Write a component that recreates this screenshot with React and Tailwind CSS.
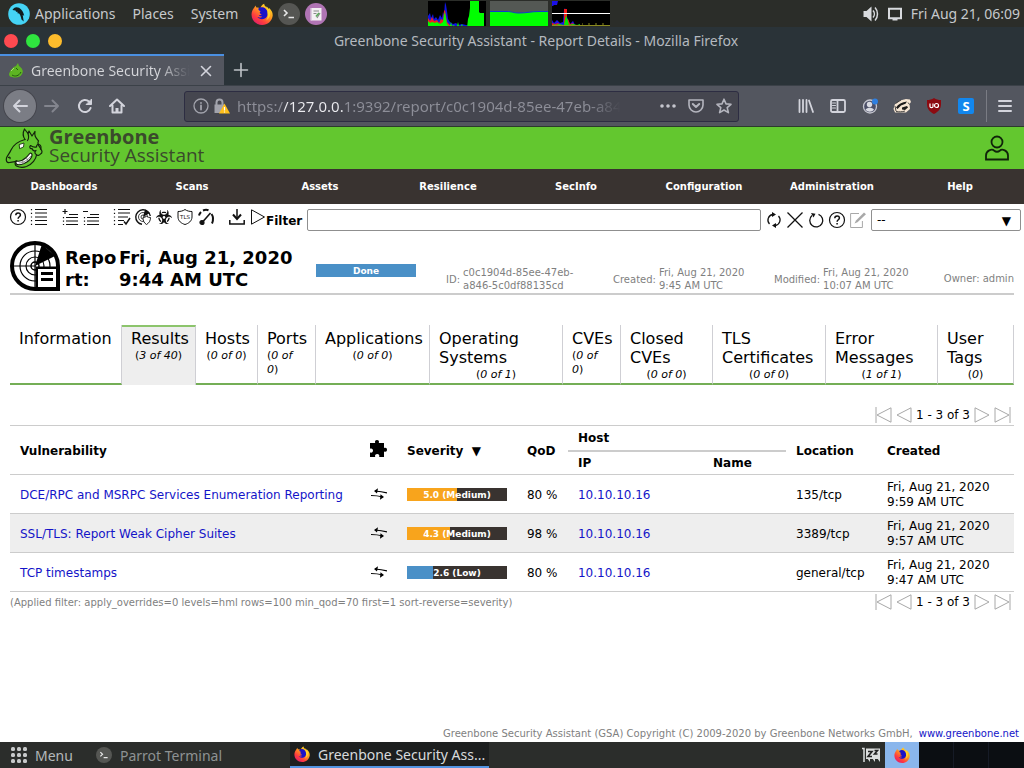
import React from "react";
import { FaBiohazard } from "react-icons/fa";

/* ---------- desktop icons ---------- */

const FirefoxIcon = ({ className = "size-[22px]" }) => (
  <svg viewBox="0 0 24 24" className={`shrink-0 ${className}`} aria-hidden="true">
    <defs>
      <linearGradient id="ffx" x1="0.85" y1="0.05" x2="0.2" y2="0.95">
        <stop offset="0" stopColor="#ffe226" />
        <stop offset="0.4" stopColor="#ff9a1f" />
        <stop offset="0.75" stopColor="#ff3b3f" />
        <stop offset="1" stopColor="#e0206a" />
      </linearGradient>
    </defs>
    <path
      d="M3.4 5.2C4 4 4.6 3.2 5.2 2.6c0 1 .3 1.8.8 2.4 1.8-.2 3 .2 4.2 1C10.600 3.600 12 1.800 14.400.8c0 1.800 1 2.800 2.600 3.800 1 .7 1.900 1.500 2.500 2.600.2-.7.200-1.300 0-2C22.600 8 24 11 23.600 14.200 22.900 19.800 18 24 12.200 24 5.800 24 .6 19.200.6 12.800c0-2.800 1-5.400 2.800-7.600z"
      fill="url(#ffx)"
    />
    <path
      d="M8 6c2-1.800 5.500-2 8 .2 2.600 2.300 3.200 6.800.6 9.600-2.600 2.600-7.400 2.400-9.600-.4 2 .8 4.200.6 5.200-.8-1.600.1-3-.5-3.600-1.600 1.400.4 2.600.2 3-.6-2.200-.8-2.800-2.300-1-3.700C9.400 9 7.800 7.800 8 6z"
      fill="#1a12c8"
    />
    <path d="M16.500 3.500c3 2 4.800 5 4.400 9-.4 3-2 5-4.400 6.500 2-3 2.200-5 1.400-8 .2-2.800-.2-5-1.400-7.500z" fill="#ffd92e" opacity="0.85" />
  </svg>
);

const TerminalIcon = ({ className = "size-[22px]" }) => (
  <svg viewBox="0 0 22 22" className={`shrink-0 ${className}`} aria-hidden="true">
    <circle cx="11" cy="11" r="11" fill="#555653" />
    <path d="M6 7l3 3-3 3M10.500 14.500h5.500" fill="none" stroke="#e8e8e8" strokeWidth="1.600" />
  </svg>
);

const NotesIcon = () => (
  <svg viewBox="0 0 22 22" className="size-[22px]" aria-hidden="true">
    <circle cx="11" cy="11" r="11" fill="#b074b4" />
    <path d="M6 5h10.500v12.500H6z" fill="#f4f0f4" />
    <path d="M8.500 8h5.500M8.500 10.500h3M12 15l3-5" stroke="#8a8a8a" strokeWidth="1.200" />
    <path d="M11 13.500l3-3.500" stroke="#58a858" strokeWidth="1.600" />
    <path d="M6 5v12.500" stroke="#d7c2da" strokeWidth="1.500" />
  </svg>
);

const ParrotIcon = () => (
  <svg viewBox="0 0 22 22" className="size-[22px]" aria-hidden="true">
    <circle cx="11" cy="11" r="10.800" fill="#45d3f5" />
    <path d="M4.500 7C5.500 4.300 8.500 3.400 11 4.800c2.800 1.500 4.500 4.500 5.200 8l-1.500-.8 1 6.500-2.200-2c-.6-3-1.300-4.800-2.800-6.500l-.7 1-.8-2.500-1 .6-.7-1.600C6.200 7.300 5.300 7 4.500 7z" fill="#111b1e" />
  </svg>
);

const VolumeIcon = () => (
  <svg viewBox="0 0 16 16" className="size-4" aria-hidden="true">
    <path d="M0.500 5H3.500L8.500 0.500V15.500L3.500 11H0.500z" fill="#d8dade" />
    <path d="M10 4.500c1.800 2 1.800 5 0 7M12 1.500c3.300 3.500 3.300 9.500 0 13" fill="none" stroke="#d8dade" strokeWidth="1.500" />
  </svg>
);

const ScreenIcon = () => (
  <svg viewBox="0 0 16 16" className="size-4" aria-hidden="true">
    <path d="M2 2.800h12v9.400H2z" fill="none" stroke="#d8dade" strokeWidth="2" />
    <path d="M5.500 13.500h5" stroke="#d8dade" strokeWidth="2" />
  </svg>
);

const CpuGraph = () => (
  <svg viewBox="0 0 58 25" className="h-[25px] w-[58px]" aria-hidden="true">
    <path d="M0 0h58v25H0z" fill="#000" />
    <path d="M0 25V15l2-3 1 5 2-4 1 5 2-2 2 3 2-5 2 3 1-6 1 3 1-13 1 3 1 6 1 8 2 3 3 2 3-1 2 2 4-1 4 1 6 1v4z" fill="#1014e0" />
    <path d="M0 25v-8l2 3 2-4 2 4 3-1 2 3 2-4 2 1 1-9 1-1 1 6 1 6 3 3 3 1v2z" fill="#f02020" />
    <path d="M0 25v-5l2 2 2-1 3 1 2-1 3 2 3-2 1-7 1-3 1 6 1 6 2 2h1l1-4 1 4 2-1 1 2 2-1 1-4 1 4h2l1-2 1 3 2-1 2 2 1-9 1-3 1-8V0h9v11l1 1h4V25z" fill="#00ff00" />
  </svg>
);

const MemGraph = () => (
  <svg viewBox="0 0 58 25" className="h-[25px] w-[58px]" aria-hidden="true">
    <path d="M0 0h58v25H0z" fill="#545854" />
    <path d="M0 10.500h17c5 0 6 1.500 12 1.500 8 0 12-1.500 20-1.500h9V25H0z" fill="#00ff00" />
    <path d="M0 10.500h17c5 0 6 1.500 12 1.500 8 0 12-1.500 20-1.500h9" fill="none" stroke="#1238d0" />
  </svg>
);

const NetGraph = () => (
  <svg viewBox="0 0 58 25" className="h-[25px] w-[58px]" aria-hidden="true">
    <path d="M0 0h58v25H0z" fill="#000" />
    <path d="M0 0h6l-1 4H2L1 5H0zM0 25v-6l2 3 3-3 3 3 3-1 1-12 1-2 1 4 1 5 3 7 3-3 2 4z" fill="#1a10e8" />
    <path d="M12 8h3v12h-3zM0 25v-3l3 1 3-1 3 2h3v-6h4l2 5 3-1 2 3z" fill="#f01818" />
    <path d="M1 25l1-2 2 1 3-1 5 1 1-5 1-5 2 6 1 4 4-1 4 1 3-1v2z" fill="#00e800" />
    <path d="M0 24.500h58M30 23h1M36 23h2M43 23h2M50 23h2" stroke="#8a8a20" />
    <path d="M0 12.500h58" stroke="#fff" />
  </svg>
);

/* ---------- browser icons ---------- */

const LineIcon = ({ d, size = "size-4", w = 2, children, color = "#d3d4dc" }) => (
  <svg viewBox="0 0 16 16" className={size} fill="none" stroke={color} strokeWidth={w} strokeLinecap="round" strokeLinejoin="round" aria-hidden="true">
    {d && <path d={d} />}
    {children}
  </svg>
);

const DragonHead = ({ className }) => (
  <svg viewBox="0 0 40 40" className={className} aria-hidden="true">
    <g fill="none" stroke="#14240c" strokeWidth="1.200" strokeLinejoin="round" strokeLinecap="round">
      <path d="M20 11.500C14 13 8.500 17 6 22c-1.500 3.500-3.500 5-4.500 8-.8 3 .5 5 3 4.500 2.500-.5 5-.5 7.500-1.500" />
      <path d="M20 11.500C17.500 8 18 4 19.500 1l3.500 4.500L24 3l3 5 3-4.500c-1 4.500 1 6.500 3.500 9.500-2 3 1 5.500 2.500 8" />
      <path d="M23 5.500c1 3 1 5-.5 7" />
      <path d="M34 16.500c2 .5 2.500 3 1.500 4.500 2 1.500 2 4 0 5-1 1.500-3 2-4 .5-2-.5-2-3-.5-4-1.500 1-3.500 0-4-2-2 .5-3-1.500-1.500-3 2 1.500 4 2 6 1.500 0-2 1-2.800 2.500-2.500z" />
      <path d="M31.500 27c-.5 4-4 9-10 11.500-4 1.500-8 .5-10-.5-1.500-1-2-3-.5-5" />
      <path d="M11.500 33c4 1 7-1 9-3 2.500-1.500 3-4 5-5 1.500 0 2 2 1 4-1.500 3-4 5-7.500 6.500-3 1.200-6 1.700-7.500.5-1-1-1-2 0-3z" fill="#fff" />
      <path d="M14 35c4 0 9-3 12-7M17.500 32.500l1 3.500M21.500 30l1.500 3" stroke="#666" strokeWidth="0.700" />
      <path d="M14.500 16.500l4.500-1.500-.5 4-3.500 1.500z" fill="#fff" strokeWidth="0.800" />
      <path d="M3.500 29.500c1.200-.8 2 0 1.500 1.200" />
    </g>
  </svg>
);

const GreenFavicon = () => (
  <svg viewBox="0 0 16 16" className="size-4 shrink-0" aria-hidden="true">
    <path d="M1 11C2 7 5 4 8 3l2-3 1 3c3 2 5 5 3 8-2 4-7 4-10 3-2 0-3-1-3-3z" fill="#5db522" />
    <path d="M4 12c3 2 7 1 9-3M8 5l2 2" stroke="#235c10" fill="none" />
    <path d="M3 8l3-3" stroke="#a5e070" />
  </svg>
);

const ToolButton = ({ label, children, className = "" }) => (
  <button type="button" aria-label={label} className={`flex size-8 items-center justify-center ${className}`}>
    {children}
  </button>
);

/* ---------- page icons ---------- */

const I = ({ children, label, muted, w = 1.2 }) => (
  <button type="button" aria-label={label} className="size-4 shrink-0">
    <svg viewBox="0 0 16 16" className="size-4 overflow-visible" fill="none" stroke={muted ? "#a8a8a8" : "#111"} strokeWidth={w}>
      {children}
    </svg>
  </button>
);

const HelpGlyph = () => (
  <>
    <circle cx="8" cy="8" r="7.500" />
    <path d="M5.800 6.200c0-3 4.600-3 4.600-.2 0 1.800-2.300 1.800-2.300 3.800M8.100 11v1.500" strokeWidth="1.500" />
  </>
);

const ListGlyph = () => (
  <>
    <path d="M4 .5h12M4 4h12M4 8h12M4 11.500h12M4 15.500h12" strokeWidth="1.200" />
    <path d="M0.500 0v16" strokeDasharray="1.200 2.500" />
  </>
);

const Radar = ({ className }) => (
  <svg viewBox="0 0 50 50" className={className} fill="none" stroke="#000" aria-hidden="true">
    <circle cx="25" cy="25" r="23" strokeWidth="4" />
    <circle cx="25" cy="25" r="15" strokeWidth="1.200" />
    <circle cx="25" cy="25" r="9" strokeWidth="1.200" />
    <circle cx="25" cy="25" r="4" strokeWidth="1.500" />
    <path d="M2 25h24M25 2v46" strokeWidth="1.200" />
    <path d="M25 25L32 3l13 12z" fill="#000" stroke="none" />
    <path d="M25.500 25.500H50V50H25.500z" fill="#000" stroke="none" />
    <path d="M28 28h18v19H28z" fill="#fff" stroke="none" />
    <path d="M31 32.500h12M31 38.500h12" strokeWidth="3" />
    <path d="M25 48h25" strokeWidth="4" />
  </svg>
);

const DeltaIcon = () => (
  <svg viewBox="0 0 16 12" className="block h-3 w-4" fill="none" stroke="#000" strokeWidth="1.200" aria-hidden="true">
    <path d="M16 5C12 3.800 8 3.200 4 3M0 7.500c4 0 8 .5 12 1.500" />
    <path d="M3 3L7 .2 6 5.500zM13 9L9.500 6.300 9 11.800z" fill="#000" stroke="none" />
  </svg>
);

const PuzzleIcon = () => (
  <svg viewBox="0 0 17 17" className="block size-[17px]" aria-label="Solution type" role="img">
    <path d="M0 3h5.200C4.500 1 5.500 0 7 0s2.500 1 1.800 3H14v5c2-.8 3 .2 3 1.700s-1 2.500-3 1.700V17H9.200c.7-2-.5-3-2-3s-2.700 1-2 3H0v-4.500c2 .6 3-.5 3-1.900S2 8 0 8.700z" fill="#000" />
  </svg>
);

/* ---------- data ---------- */

const menus = ["Dashboards", "Scans", "Assets", "Resilience", "SecInfo", "Configuration", "Administration", "Help"];

const tabs = [
  ["Information", null],
  ["Results", "3 of 40"],
  ["Hosts", "0 of 0"],
  ["Ports", "0 of 0"],
  ["Applications", "0 of 0"],
  ["Operating Systems", "0 of 1"],
  ["CVEs", "0 of 0"],
  ["Closed CVEs", "0 of 0"],
  ["TLS Certificates", "0 of 0"],
  ["Error Messages", "1 of 1"],
  ["User Tags", "0"],
];

const results = [
  { name: "DCE/RPC and MSRPC Services Enumeration Reporting", score: 5.0, level: "Medium", qod: 80, host: "10.10.10.16", loc: "135/tcp", time: "9:59 AM UTC" },
  { name: "SSL/TLS: Report Weak Cipher Suites", score: 4.3, level: "Medium", qod: 98, host: "10.10.10.16", loc: "3389/tcp", time: "9:57 AM UTC" },
  { name: "TCP timestamps", score: 2.6, level: "Low", qod: 80, host: "10.10.10.16", loc: "general/tcp", time: "9:47 AM UTC" },
];

/* ---------- sections ---------- */

const DesktopPanel = () => (
  <div className="grid h-[27px] grid-cols-[1fr_auto_1fr] items-center bg-[#2b2d29] text-[14px] text-[#c6c9cc]">
    <nav className="flex items-center pl-2">
      <ParrotIcon />
      <button type="button" className="ml-[5px]">Applications</button>
      <button type="button" className="ml-[17px]">Places</button>
      <button type="button" className="ml-[17px]">System</button>
      <span className="ml-[13px] flex gap-[5px]">
        <FirefoxIcon />
        <TerminalIcon />
        <NotesIcon />
      </span>
    </nav>
    <div className="flex gap-1 pl-[14px]">
      <CpuGraph />
      <MemGraph />
      <NetGraph />
    </div>
    <div className="flex items-center justify-end gap-2 pr-1">
      <VolumeIcon />
      <ScreenIcon />
      <span>Fri Aug 21, 06:09</span>
    </div>
  </div>
);

const BrowserChrome = () => (
  <header className="bg-[#2a3338] text-[14px] text-[#b4b9bf]">
    <div className="flex h-[27px] items-center pl-1">
      <div className="flex gap-2">
        <button type="button" aria-label="Close window" className="size-[14px] rounded-full bg-[#ff4a50]" />
        <button type="button" aria-label="Maximize window" className="size-[14px] rounded-full bg-[#2fe43f]" />
        <button type="button" aria-label="Minimize window" className="size-[14px] rounded-full bg-[#fdbc2c]" />
      </div>
      <h1 className="flex-1 pr-[14px] text-center">Greenbone Security Assistant - Report Details - Mozilla Firefox</h1>
    </div>
    <div className="flex h-[31px] items-stretch">
      <div className="flex w-56 items-center border-t-2 border-[#4a90e2] bg-[#53565f] pr-[10px] pl-2 text-[#d5d6da]">
        <GreenFavicon />
        <span className="ml-[7px] flex-1 overflow-hidden bg-[linear-gradient(90deg,#d5d6da_80%,transparent)] bg-clip-text whitespace-nowrap text-transparent">
          Greenbone Security Assistant
        </span>
        <button type="button" aria-label="Close tab" className="ml-2">
          <LineIcon d="M3.500 3.500l9 9M12.500 3.500l-9 9" w={1.6} />
        </button>
      </div>
      <button type="button" aria-label="New tab" className="ml-[9px] self-center">
        <LineIcon d="M1.500 8h13M8 1.500v13" w={1.600} color="#bfc3c7" />
      </button>
    </div>
    <div className="flex h-[42px] items-center border-t border-b border-t-[#3b4148] border-b-[#2c3b2c] bg-[#53565f] pr-[3px] pl-1">
      <ToolButton label="Back" className="rounded-full bg-[#7b7d85] ring-1 ring-[#45464e]">
        <LineIcon d="M15 8H2M7.500 2.500L2 8l5.500 5.500" />
      </ToolButton>
      <ToolButton label="Forward">
        <LineIcon d="M1 8h13M8.500 2.500L14 8l-5.500 5.500" color="#83858e" />
      </ToolButton>
      <ToolButton label="Reload" className="ml-px">
        <LineIcon d="M13.600 10A6 6 0 1 1 12 3.600">
          <path d="M14.500 1.500v5H9.500z" fill="#d3d4dc" strokeWidth="1" />
        </LineIcon>
      </ToolButton>
      <ToolButton label="Home">
        <LineIcon d="M1 8l7-6.500L15 8M3.500 7.500v7h9v-7" w={2}>
          <path d="M8 14v-4" strokeWidth="3" strokeLinecap="butt" />
        </LineIcon>
      </ToolButton>
      <div className="ml-[51px] flex h-[31px] flex-1 items-center rounded-[3px] border border-[#2d2d42] bg-[#45464f] pr-[6px] pl-2">
        <LineIcon w={1.3} color="#a2a3ac">
          <circle cx="8" cy="8" r="7" />
          <path d="M8 7.500v4M8 4.800v.2" strokeWidth="1.800" />
        </LineIcon>
        <svg viewBox="0 0 18 16" className="ml-1 h-4 w-[18px] shrink-0" aria-hidden="true">
          <path d="M3.500 7V4.500c0-4 6-4 6 0V7" fill="none" stroke="#a2a3ac" strokeWidth="2" />
          <path d="M1.500 6.500h10V15h-10z" fill="#a2a3ac" />
          <path d="M11.500 5.500L17 15.500H6z" fill="#ffbf1a" />
          <path d="M11.500 9v3.500M11.500 13.500v1" stroke="#fff" strokeWidth="1.200" />
        </svg>
        <input
          aria-label="Address"
          defaultValue="https://127.0.0.1:9392/report/c0c1904d-85ee-47eb-a846-5c0df88135cd"
          className="ml-[6px] w-[384px] min-w-0 bg-[linear-gradient(90deg,#8d8e98_47px,#ececf0_47px,#ececf0_107px,#8d8e98_107px,#8d8e98_350px,transparent_384px)] bg-clip-text text-[15px] text-transparent outline-none"
        />
        <div className="ml-auto flex items-center gap-3">
          <LineIcon color="#c4c5cd">
            <path d="M2 8h.01M8 8h.01M14 8h.01" strokeWidth="3.600" />
          </LineIcon>
          <LineIcon d="M1 2h14v5c0 4-3.500 7-7 7s-7-3-7-7z" w={1.6} color="#b4b5be">
            <path d="M4.800 6l3.200 3 3.200-3" strokeWidth="2" />
          </LineIcon>
          <LineIcon d="M8 1.200l2 4.700 5 .4-3.800 3.300 1.200 5L8 12l-4.400 2.600 1.200-5L1 6.300l5-.4z" w={1.6} color="#b4b5be" />
        </div>
      </div>
      <div className="ml-[51px] flex items-center">
        <ToolButton label="Library">
          <LineIcon d="M1.500 2v12M5 2v12M8.500 2v12M11 2.500l4 11.500" w={1.8} />
        </ToolButton>
        <ToolButton label="Sidebars">
          <LineIcon w={1.8}>
            <rect x="1" y="2" width="14" height="12" rx="1.500" />
            <path d="M7.500 2v12" />
            <path d="M2.500 5h3M2.500 7.500h3M2.500 10h3" strokeWidth="1.100" />
          </LineIcon>
        </ToolButton>
        <ToolButton label="Account">
          <svg viewBox="0 0 16 16" className="size-4" aria-hidden="true">
            <circle cx="8" cy="8.500" r="6.500" fill="#4c5068" stroke="#c5c6cf" strokeWidth="1.300" />
            <circle cx="7.500" cy="6.500" r="2.700" fill="#d9dae1" />
            <path d="M3.500 11.500c2-2.500 6.500-2.500 8.500 0-2 3-6.500 3-8.500 0z" fill="#d9dae1" />
            <circle cx="13" cy="3.500" r="3" fill="#2f7fe0" />
          </svg>
        </ToolButton>
        <ToolButton label="Privacy Badger">
          <svg viewBox="0 0 18 16" className="h-4 w-[18px]" aria-hidden="true">
            <path d="M.5 11L2 6l5-3.500L13 1l4 .5 1 2.500-1.500 2 .5 5-4 3.500H2z" fill="#f4e4d2" />
            <path d="M3 9.500C5 6 9 4 14 3.500l-1.500 2.200L8 7.500l-3.500 3.500z" fill="#1b1b1b" />
            <path d="M9 9.500l5-1.500 1 1.500-3 2.500-3-.5z" fill="#1b1b1b" />
            <path d="M2.500 5.500L8 2M3 13.500c3 .5 6 .5 9-.5M2 8l1 5M15 4.500l1.500 2" fill="none" stroke="#333" strokeWidth="0.900" />
          </svg>
        </ToolButton>
        <ToolButton label="uBlock Origin">
          <svg viewBox="0 0 16 16" className="size-4" aria-hidden="true">
            <path d="M8 0c2 1.500 4.500 2 7 2v4c0 5-3 8-7 10C4 14 1 11 1 6V2c2.500 0 5-.5 7-2z" fill="#8c0a10" />
            <path d="M4 5.500v3c0 1.500 3 1.500 3 0v-3" fill="none" stroke="#fff" strokeWidth="1.200" />
            <circle cx="10.500" cy="7.500" r="2" fill="none" stroke="#fff" strokeWidth="1.200" />
          </svg>
        </ToolButton>
        <ToolButton label="Script extension">
          <span className="flex size-4 items-center justify-center rounded-[2px] bg-[#1287ee] text-[13px] leading-4 font-bold text-white">S</span>
        </ToolButton>
        <span className="ml-1 h-8 w-px bg-[#7a7c84]" />
        <ToolButton label="Menu" className="ml-[2px]">
          <LineIcon d="M2 3h12M2 8h12M2 13h12" />
        </ToolButton>
      </div>
    </div>
  </header>
);

const FilterBar = () => (
  <div className="flex items-start pt-[5px] pr-[3px] pl-[10px]">
    <div className="flex shrink-0 gap-[15px]">
      <div className="flex gap-[5px]">
        <I label="Help"><HelpGlyph /></I>
        <I label="Reports list"><ListGlyph /></I>
      </div>
      <div className="flex gap-[5px]">
        <I label="Add to assets">
          <path d="M0.500 2.500h5M3 0v5M7 5.500h9M4 8.500h12M4 12h12M4 15.500h12" strokeWidth="1.200" />
          <path d="M1.500 8v8" strokeDasharray="1.200 2.300" />
        </I>
        <I label="Remove from assets">
          <path d="M0 2.500h5M7 5.500h9M4 8.500h12M4 12h12M4 15.500h12" strokeWidth="1.200" />
          <path d="M1.500 8v8" strokeDasharray="1.200 2.300" />
        </I>
      </div>
      <div className="flex gap-[5px]">
        <I label="Corresponding task">
          <path d="M4 .5h12M4 4h12M4 8h10M4 11.500h6M4 15.500h5" strokeWidth="1.200" />
          <path d="M0.500 0v16" strokeDasharray="1.200 2.500" />
          <path d="M10 12.500l2 2.500 4-6" strokeWidth="1.500" />
        </I>
        <I label="Corresponding results">
          <path d="M7 15.300A7.300 7.300 0 1 1 15.300 7" strokeWidth="1.400" />
          <circle cx="8" cy="8" r="4.500" strokeWidth="0.800" />
          <circle cx="8" cy="8" r="2" strokeWidth="0.800" />
          <path d="M8 8l2-7.500L15 4z" fill="#111" stroke="none" />
          <path d="M8 8.500c1.500 0 2.500-.5 3.500-1.200 1 .8 2.300 1.200 4 1.200 0 3.500-1.500 5.500-4 7-2.300-1.500-3.500-3.500-3.500-7z" fill="#fff" strokeWidth="0.900" />
        </I>
        <button type="button" aria-label="Corresponding vulnerabilities" className="size-4 shrink-0 text-[#111]">
          <FaBiohazard className="size-4" aria-hidden="true" />
        </button>
        <I label="Corresponding TLS certificates">
          <path d="M8 .5c2 1.500 4.500 2 7 2V8c0 4-3.500 6.500-7 7.500C4.500 14.500 1 12 1 8V2.500c2.500 0 5-.5 7-2z" strokeWidth="1" />
          <text x="8" y="9.500" textAnchor="middle" fontSize="5.500" fill="#111" stroke="none">TLS</text>
        </I>
        <I label="Corresponding performance">
          <path d="M1 6.500C1.300 5 2 4 3 3M5 1.500c2-.8 4-.8 5.500-.2M13.500 5c1.800 2.500 2 6 .5 9.500" strokeWidth="2" />
          <path d="M5 12.500L12.500 4" strokeWidth="1.600" />
          <circle cx="4" cy="13.500" r="2" fill="#111" />
        </I>
      </div>
      <div className="flex gap-[5px]">
        <I label="Download report">
          <path d="M.8 11v4h14.400v-4M8 0v9" strokeWidth="1.500" />
          <path d="M4 5.500L8 10l4-4.500" strokeWidth="2" />
        </I>
        <I label="Trigger alert"><path d="M1.500 .8L14.500 8 1.500 15.200z" strokeWidth="1" /></I>
      </div>
    </div>
    <label htmlFor="powerfilter" className="mt-1 leading-4 font-bold">Filter</label>
    <input id="powerfilter" className="ml-[5px] h-[22px] min-w-0 flex-1 rounded-[2px] border border-[#8f8f8f] px-1" />
    <div className="mx-[5px] mt-[3px] flex shrink-0 gap-[5px]">
      <I label="Update filter">
        <path d="M6.500 2.500a5.700 5.700 0 0 0-3 9.500M9.500 13.500a5.700 5.700 0 0 0 3-9.500" strokeWidth="1.300" />
        <path d="M6 0l4 2.500L6 5zM10 11l-4 2.500 4 2.500z" fill="#111" stroke="none" />
      </I>
      <I label="Remove filter"><path d="M0.500 0.500l15 15M15.500 0.500l-15 15" strokeWidth="1.300" /></I>
      <I label="Reset filter">
        <path d="M4 3.500a6.500 6.500 0 1 0 6.500-1.200" strokeWidth="1.300" />
        <path d="M3 1l4.500.8-2 3.800z" fill="#111" stroke="none" />
      </I>
      <I label="Filter help"><HelpGlyph /></I>
      <I label="Edit filter" muted>
        <path d="M9 1.500H.6v14h11.800V9" strokeWidth="1" />
        <path d="M4.500 11.500L6 8.500 14 .5l2 1.800-8.500 8z" fill="#a8a8a8" stroke="none" />
      </I>
    </div>
    <div className="relative w-[150px] shrink-0">
      <select aria-label="Saved filters" className="h-[22px] w-full appearance-none rounded-[2px] border border-[#8f8f8f] bg-white px-[5px] leading-4">
        <option>--</option>
      </select>
      <span className="pointer-events-none absolute top-1 right-[10px] leading-4">▼</span>
    </div>
  </div>
);

const Info = ({ label, children, className = "", valueClass = "" }) => (
  <div className={`flex shrink-0 items-center gap-[3px] ${className}`}>
    <dt className="whitespace-nowrap">{label}:</dt>
    <dd className={valueClass}>{children}</dd>
  </div>
);

const ReportHeader = () => (
  <div className="mt-[10px] flex items-end border-b-2 border-[#cccccc]">
    <div className="flex items-center">
      <Radar className="mb-[2px] size-[50px] shrink-0" />
      <h2 className="mt-1 ml-[5px] flex text-[18px] leading-[22px] font-bold">
        <span className="w-[54px] break-all">Report:</span>
        <span className="w-[186px]">Fri, Aug 21, 2020 9:44 AM UTC</span>
      </h2>
    </div>
    <div className="mb-4 ml-[11px] h-[13px] w-[100px] shrink-0 self-end bg-[#4a90c7] text-center text-[9px] leading-[14px] font-bold text-white">Done</div>
    <dl className="ml-[30px] flex min-w-0 flex-1 items-end pb-px text-[10px] leading-[13px] text-[#7f7f7f]">
      <Info label="ID" className="w-[167px]" valueClass="w-[115px]">c0c1904d-85ee-47eb-a846-5c0df88135cd</Info>
      <Info label="Created" className="w-[161px]" valueClass="w-[88px]">Fri, Aug 21, 2020 9:45 AM UTC</Info>
      <Info label="Modified" valueClass="w-[88px]">Fri, Aug 21, 2020 10:07 AM UTC</Info>
      <Info label="Owner" className="mb-[7px] ml-auto">admin</Info>
    </dl>
  </div>
);

const Tabs = () => (
  <div
    role="tablist"
    className="mt-[30px] grid grid-cols-[112fr_74fr_62fr_58fr_114fr_133fr_58fr_92fr_113fr_112fr_76fr]"
  >
    {tabs.map(([name, count]) => {
      const active = name === "Results";
      return (
        <button
          key={name}
          type="button"
          role="tab"
          aria-selected={active}
          className={`flex min-h-[60px] min-w-0 flex-col items-center border-r border-r-[#cfcfd4] px-[9px] text-left ${
            active
              ? "border-t-2 border-t-[#8cc46c] bg-[#eeeeee] pt-[2px]"
              : "border-b-2 border-b-[#74ae56] pt-1"
          }`}
        >
          <span className="self-start text-[16px] leading-[19px]">{name}</span>
          {count && (
            <span className="mt-px text-[11px] leading-[14px]">
              (<i>{count}</i>)
            </span>
          )}
        </button>
      );
    })}
  </div>
);

const Pager = () => (
  <nav aria-label="Pagination" className="flex items-center gap-[5px] pr-[3px]">
    <I label="First" muted w={1}><path d="M1 0v16M16 .8v14.400L2 8z" /></I>
    <I label="Previous" muted w={1}><path d="M15 .8v14.400L1 8z" /></I>
    <span className="-mx-px pt-px leading-[15px]">1 - 3 of 3</span>
    <I label="Next" muted w={1}><path d="M1 .8v14.400L15 8z" /></I>
    <I label="Last" muted w={1}><path d="M15 0v16M0 .8v14.400L14 8z" /></I>
  </nav>
);

const SeverityBar = ({ score, level }) => (
  <div className="relative h-[13px] bg-[#393330] text-center text-[9px] leading-[14px] font-bold text-white">
    <div className={`absolute inset-y-0 left-0 ${level === "Low" ? "bg-[#4a90c7]" : "bg-[#f8a41c]"}`} style={{ width: `${score * 10}%` }} />
    <span className="relative">{score.toFixed(1)} ({level})</span>
  </div>
);

const ResultsTable = () => (
  <table className="w-full table-fixed border-collapse text-left">
    <colgroup>
      <col />
      <col className="w-9" />
      <col className="w-[120px]" />
      <col className="w-[51px]" />
      <col className="w-[135px]" />
      <col className="w-[83px]" />
      <col className="w-[91px]" />
      <col className="w-[137px]" />
    </colgroup>
    <thead className="border-y border-[#cccccc]">
      <tr className="h-[25px]">
        <th rowSpan={2} className="px-[10px] pt-[2px]">Vulnerability</th>
        <th rowSpan={2} className="px-[9px] pb-1"><PuzzleIcon /></th>
        <th rowSpan={2} className="px-[10px] pt-[2px] whitespace-nowrap">Severity&nbsp; ▼</th>
        <th rowSpan={2} className="px-[10px] pt-[2px]">QoD</th>
        <th colSpan={2} className="border-b-2 border-[#cccccc] px-[10px]">Host</th>
        <th rowSpan={2} className="px-[10px] pt-[2px]">Location</th>
        <th rowSpan={2} className="px-[10px] pt-[2px]">Created</th>
      </tr>
      <tr className="h-6">
        <th className="px-[10px]">IP</th>
        <th className="px-[10px]">Name</th>
      </tr>
    </thead>
    <tbody>
      {results.map((r) => (
        <tr key={r.name} className="h-[39px] border-b border-[#cccccc] even:bg-[#eeeeee]">
          <td className="px-[10px] pt-[2px]"><a href="#result" className="text-[#1414c8]">{r.name}</a></td>
          <td className="px-[10px]"><DeltaIcon /></td>
          <td className="px-[10px]"><SeverityBar score={r.score} level={r.level} /></td>
          <td className="pt-[2px] pl-[10px] whitespace-nowrap">{r.qod} %</td>
          <td className="px-[10px] pt-[2px]"><a href="#host" className="text-[#1414c8]">{r.host}</a></td>
          <td className="px-[10px]" />
          <td className="px-[10px] pt-[2px]">{r.loc}</td>
          <td className="px-[10px] pt-[2px] leading-[15px]">Fri, Aug 21, 2020<br />{r.time}</td>
        </tr>
      ))}
    </tbody>
  </table>
);

const Taskbar = () => (
  <footer className="flex h-[26px] items-center bg-[#2b2d2b] text-[14px] text-[#b4b8ba]">
    <button type="button" className="flex w-[90px] items-center gap-2 pl-[11px]">
      <svg viewBox="0 0 16 16" className="size-4" fill="#c8cacb" aria-hidden="true">
        {[0, 6, 12].map((x) => [0, 6, 12].map((y) => <rect key={`${x}-${y}`} x={x} y={y} width="4" height="4" rx="1.500" />))}
      </svg>
      Menu
    </button>
    <button type="button" className="flex w-[200px] items-center gap-2 pl-[6px] text-[#8e9293]">
      <TerminalIcon className="size-4" />
      Parrot Terminal
    </button>
    <button type="button" className="flex h-full w-[199px] items-center gap-2 border-b-2 border-[#5294e2] bg-[#1d1f1f] pl-1 whitespace-nowrap text-[#d8dadc]">
      <FirefoxIcon className="size-4" />
      Greenbone Security Ass...
    </button>
    <svg viewBox="0 0 18 16" className="ml-auto h-4 w-[18px]" aria-hidden="true">
      <path d="M0 1.500h2V15" fill="none" stroke="#dcdede" strokeWidth="1.500" />
      <path d="M4 1.500h14V12H4zM5 11h3v4zM10 11h3v4zM15 11h3v4z" fill="#dcdede" />
      <path d="M6 4.500h4L6 9.500h4M12.500 3.500h3l-3 3.500h3" fill="none" stroke="#222" strokeWidth="1.600" />
    </svg>
    <button type="button" aria-label="Workspace 1" className="ml-[5px] flex h-full w-[34px] items-center justify-center bg-[#8ab6ec]">
      <FirefoxIcon className="size-4" />
    </button>
    <div className="grid h-full w-[105px] grid-cols-3 divide-x divide-[#161b26] bg-[#0b0e12]">
      <button type="button" aria-label="Workspace 2" />
      <button type="button" aria-label="Workspace 3" />
      <button type="button" aria-label="Workspace 4" />
    </div>
  </footer>
);

export default function App() {
  return (
    <div className="flex min-h-screen flex-col bg-white font-['Noto_Sans',sans-serif]">
      <DesktopPanel />
      <BrowserChrome />
      <div className="flex flex-1 flex-col font-['DejaVu_Sans',sans-serif] text-[12px] text-black">
        <div className="flex h-[42px] items-center bg-[#63c72f] pr-[14px] pl-[5px]">
          <DragonHead className="size-10" />
          <div className="ml-1 pb-1 font-['Open_Sans',sans-serif] text-[#3a4a2c]">
            <div className="text-[20px] leading-[18px] font-bold">Greenbone</div>
            <div className="text-[19px] leading-[19px]">Security Assistant</div>
          </div>
          <button type="button" aria-label="User menu" className="ml-auto">
            <svg viewBox="0 0 26 26" className="size-[26px]" fill="none" stroke="#10240a" strokeWidth="1.800" aria-hidden="true">
              <circle cx="13" cy="7" r="5.500" />
              <path d="M2 24.500v-4c0-5 6-7 8-5 2 1.700 4 1.700 6 0 2-2 8 0 8 5v4z" />
            </svg>
          </button>
        </div>
        <nav className="grid h-[35px] grid-cols-8 items-center bg-[#393330] text-center text-[10px] font-bold text-white">
          {menus.map((m) => (
            <a key={m} href={`#${m}`}>{m}</a>
          ))}
        </nav>
        <FilterBar />
        <main className="px-[10px]">
          <ReportHeader />
          <Tabs />
          <div className="mt-[22px] mb-[2px] flex justify-end"><Pager /></div>
          <ResultsTable />
          <div className="mt-[2px] flex items-center justify-between">
            <p className="text-[10px] text-[#7f7f7f]">
              (Applied filter: apply_overrides=0 levels=hml rows=100 min_qod=70 first=1 sort-reverse=severity)
            </p>
            <Pager />
          </div>
        </main>
        <div className="mt-auto flex justify-end gap-[6px] pr-[5px] pb-[1px] text-[10px] leading-[15px] text-[#7f7f7f]">
          <span>Greenbone Security Assistant (GSA) Copyright (C) 2009-2020 by Greenbone Networks GmbH,</span>
          <a href="#greenbone" className="text-[#1414c8]">www.greenbone.net</a>
        </div>
      </div>
      <Taskbar />
    </div>
  );
}
